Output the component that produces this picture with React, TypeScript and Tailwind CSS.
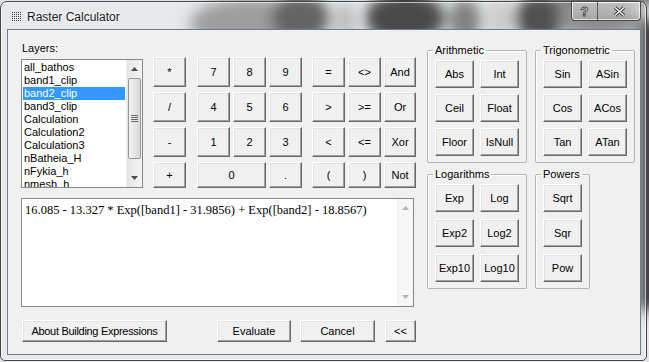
import type { ReactNode } from 'react';

const btn =
  'flex items-center justify-center bg-[#f0f0f0] border border-t-white border-l-white border-r-[#696969] border-b-[#696969] shadow-[inset_-1px_-1px_0_#a0a0a0,inset_1px_1px_0_#e3e3e3] text-[11px] leading-none text-black';

const Btn = ({ children, className = '' }: { children: ReactNode; className?: string }) => (
  <button className={`${btn} ${className}`}>{children}</button>
);

const layers = [
  'all_bathos',
  'band1_clip',
  'band2_clip',
  'band3_clip',
  'Calculation',
  'Calculation2',
  'Calculation3',
  'nBatheia_H',
  'nFykia_h',
  'nmesh_h',
];

const Arrow = ({ up, color }: { up?: boolean; color: string }) => (
  <svg width="7" height="4" viewBox="0 0 7 4">
    <path d={up ? 'M0 4 L3.5 0 L7 4 Z' : 'M0 0 L3.5 4 L7 0 Z'} fill={color} />
  </svg>
);

const Group = ({ title, width, gap, children }: { title: string; width: string; gap: string; children: ReactNode }) => (
  <fieldset
    className={`${width} border border-[#b4b4b4] rounded-[2px] shadow-[inset_1px_1px_0_#fff] pt-[3px] pb-[6px]`}
  >
    <legend className="ml-[5px] px-[2px] text-[11px] leading-[13px] text-black">{title}</legend>
    <div className={`flex flex-wrap justify-center ${gap}`}>{children}</div>
  </fieldset>
);

export default function App() {
  return (
    <div className="relative w-[649px] h-[362px] overflow-hidden bg-[#5a5a5a] font-['Liberation_Sans',Arial,sans-serif]">
      {/* blurred desktop behind the glass frame */}
      <svg className="absolute inset-0" width="649" height="362">
        <defs>
          <filter id="b" x="-20%" y="-20%" width="140%" height="140%">
            <feGaussianBlur stdDeviation="7" />
          </filter>
        </defs>
        <rect width="649" height="362" fill="#e1e5e8" />
        <g filter="url(#b)">
          <ellipse cx="250" cy="24" rx="60" ry="26" fill="#8e8e8e" />
          <ellipse cx="300" cy="18" rx="30" ry="24" fill="#4a4a4a" />
          <ellipse cx="345" cy="20" rx="12" ry="18" fill="#b4b4b4" />
          <ellipse cx="405" cy="18" rx="40" ry="26" fill="#2a2a2a" />
          <ellipse cx="465" cy="20" rx="16" ry="22" fill="#6a6a6a" />
          <ellipse cx="500" cy="18" rx="14" ry="20" fill="#c4c4c4" />
          <ellipse cx="540" cy="18" rx="26" ry="24" fill="#333333" />
          <ellipse cx="600" cy="18" rx="42" ry="22" fill="#7a7a7a" />
          <rect x="639" y="20" width="20" height="290" fill="#2a2a2a" />
          <rect x="560" y="-10" width="100" height="12" fill="#3a3a3a" />
        </g>
      </svg>

      <div className="relative mt-[1px] w-[647px] h-[360px] rounded-t-[7px] rounded-b-[5px] border border-[#454545] bg-white/15 shadow-[inset_0_0_0_1px_rgba(255,255,255,0.6)] flex flex-col">
        {/* title bar */}
        <div className="h-[27px] flex items-start">
          <div className="flex items-center h-[27px] pl-[11px] gap-[5px]">
            <svg width="10" height="10" viewBox="0 0 10 10" className="mt-[2px]">
              {[0, 2, 4, 6, 8].map((x) =>
                [0, 2, 4, 6, 8].map((y) => <rect key={`${x}-${y}`} x={x} y={y} width="1" height="1" fill="#3a3a3a" />)
              )}
            </svg>
            <span className="text-[12px] text-[#1a1a1a] mt-[2px] [text-shadow:0_0_6px_#fff,0_0_3px_#fff]">
              Raster Calculator
            </span>
          </div>
          <div className="flex-1" />
          <div className="mr-[5px] flex h-[19px] rounded-b-[4px] border border-t-0 border-[#4a4a4a] shadow-[inset_0_0_0_1px_rgba(255,255,255,0.7)] bg-gradient-to-b from-white/50 to-white/20 overflow-hidden">
            <div className="w-[26px] flex items-center justify-center border-r border-[#5a5a5a]">
              <span className="text-[13px] font-bold text-[#eeeeee] [-webkit-text-stroke:0.8px_#404040] leading-none">?</span>
            </div>
            <div className="w-[42px] flex items-center justify-center">
              <svg width="13" height="11" viewBox="0 0 13 11">
                <path d="M2 1.5 L11 9.5 M11 1.5 L2 9.5" stroke="#404040" strokeWidth="3.4" />
                <path d="M2 1.5 L11 9.5 M11 1.5 L2 9.5" stroke="#f2f2f2" strokeWidth="1.4" />
              </svg>
            </div>
          </div>
        </div>

        {/* client area */}
        <div className="ml-[6px] w-[634px] h-[326px] border border-[#6f7c88] bg-[#f0f0f0] flex pl-[13px] pt-[12px]">
          {/* left side */}
          <div className="w-[395px] flex flex-col">
            <div className="flex items-start">
              <div className="w-[123px] flex flex-col">
                <div className="text-[11px] leading-[13px] ml-[1px]">Layers:</div>
                <div className="mt-[4px] h-[129px] border border-[#828790] bg-white flex">
                  <div className="flex-1 p-[1px] overflow-hidden">
                    {layers.map((l, i) => (
                      <div
                        key={l}
                        className={`h-[13px] leading-[13px] text-[11px] pl-[1px] whitespace-nowrap ${
                          i === 2 ? 'bg-[#3399ff] text-white' : 'text-black'
                        }`}
                      >
                        {l}
                      </div>
                    ))}
                  </div>
                  <div className="w-[16px] flex flex-col bg-gradient-to-r from-[#e6e6e6] to-[#f4f4f4] border-l border-[#ededed]">
                    <div className="h-[18px] flex items-center justify-center">
                      <Arrow up color="#4d4d4d" />
                    </div>
                    <div className="mx-[1px] h-[81px] rounded-[2px] border border-[#979797] bg-gradient-to-r from-[#f4f4f4] to-[#d9d9d9] flex flex-col items-center justify-center gap-[1px]">
                      {[0, 1, 2, 3].map((k) => (
                        <div key={k} className="w-[7px] h-[1px] bg-[#6a6a6a]" />
                      ))}
                    </div>
                    <div className="flex-1" />
                    <div className="h-[18px] flex items-center justify-center">
                      <Arrow color="#4d4d4d" />
                    </div>
                  </div>
                </div>
              </div>

              {/* keypad */}
              <div className="mt-[15px] ml-[10px] flex">
                <div className="grid grid-cols-[33px] grid-rows-[30px_30px_30px_26px] gap-y-[5px]">
                  <Btn>*</Btn>
                  <Btn>/</Btn>
                  <Btn>-</Btn>
                  <Btn>+</Btn>
                </div>
                <div className="ml-[11px] grid grid-cols-[33px_33px_33px] grid-rows-[30px_30px_30px_26px] gap-y-[5px] gap-x-[3px]">
                  <Btn>7</Btn>
                  <Btn>8</Btn>
                  <Btn>9</Btn>
                  <Btn>4</Btn>
                  <Btn>5</Btn>
                  <Btn>6</Btn>
                  <Btn>1</Btn>
                  <Btn>2</Btn>
                  <Btn>3</Btn>
                  <Btn className="col-span-2">0</Btn>
                  <Btn>.</Btn>
                </div>
                <div className="ml-[10px] grid grid-cols-[33px_33px_32px] grid-rows-[30px_30px_30px_26px] gap-y-[5px] gap-x-[3px]">
                  <Btn>=</Btn>
                  <Btn>&lt;&gt;</Btn>
                  <Btn>And</Btn>
                  <Btn>&gt;</Btn>
                  <Btn>&gt;=</Btn>
                  <Btn>Or</Btn>
                  <Btn>&lt;</Btn>
                  <Btn>&lt;=</Btn>
                  <Btn>Xor</Btn>
                  <Btn>(</Btn>
                  <Btn>)</Btn>
                  <Btn>Not</Btn>
                </div>
              </div>
            </div>

            {/* expression */}
            <div className="mt-[10px] w-[393px] h-[109px] border border-[#828790] bg-white flex">
              <div className="flex-1 pl-[3px] pt-[4px] font-['Liberation_Serif','Times_New_Roman',serif] text-[12.5px] leading-[15px] text-black whitespace-nowrap">
                16.085 - 13.327 * Exp([band1] - 31.9856) + Exp([band2] - 18.8567)
              </div>
              <div className="w-[16px] flex flex-col justify-between bg-[#f6f6f6] border-l border-[#f0f0f0]">
                <div className="h-[18px] flex items-center justify-center">
                  <Arrow up color="#b4b4b4" />
                </div>
                <div className="h-[18px] flex items-center justify-center">
                  <Arrow color="#b4b4b4" />
                </div>
              </div>
            </div>

            {/* bottom buttons */}
            <div className="mt-[13px] flex h-[22px]">
              <Btn className="ml-[1px] w-[145px] tracking-[-0.3px]">About Building Expressions</Btn>
              <Btn className="ml-[50px] w-[74px]">Evaluate</Btn>
              <Btn className="ml-[9px] w-[75px]">Cancel</Btn>
              <Btn className="ml-[10px] w-[31px]">&lt;&lt;</Btn>
            </div>
          </div>

          {/* function groups */}
          <div className="ml-[11px] mt-[2px] w-[208px] grid grid-cols-[100px_100px] gap-x-[8px] gap-y-[5px] content-start items-start">
            <Group title="Arithmetic" width="w-[100px]" gap="gap-x-[6px] gap-y-[6px]">
              {['Abs', 'Int', 'Ceil', 'Float', 'Floor', 'IsNull'].map((t) => (
                <Btn key={t} className="w-[39px] h-[28px]">
                  {t}
                </Btn>
              ))}
            </Group>
            <Group title="Trigonometric" width="w-[100px]" gap="gap-x-[6px] gap-y-[6px]">
              {['Sin', 'ASin', 'Cos', 'ACos', 'Tan', 'ATan'].map((t) => (
                <Btn key={t} className="w-[39px] h-[28px]">
                  {t}
                </Btn>
              ))}
            </Group>
            <Group title="Logarithms" width="w-[100px]" gap="gap-x-[6px] gap-y-[7px]">
              {['Exp', 'Log', 'Exp2', 'Log2', 'Exp10', 'Log10'].map((t) => (
                <Btn key={t} className="w-[39px] h-[28px]">
                  {t}
                </Btn>
              ))}
            </Group>
            <Group title="Powers" width="w-[55px]" gap="flex-col items-center gap-y-[7px]">
              {['Sqrt', 'Sqr', 'Pow'].map((t) => (
                <Btn key={t} className="w-[39px] h-[28px]">
                  {t}
                </Btn>
              ))}
            </Group>
          </div>
        </div>
      </div>
    </div>
  );
}
